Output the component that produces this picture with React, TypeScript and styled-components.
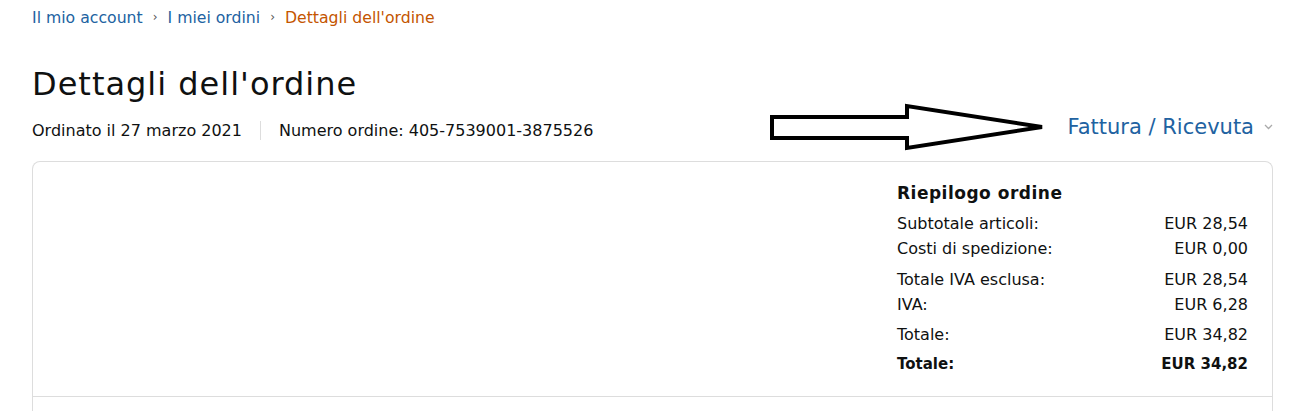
import React from "react";
import styled, { createGlobalStyle } from "styled-components";

const GlobalStyle = createGlobalStyle`
  body {
    margin: 0;
    background: #ffffff;
    font-family: "DejaVu Sans", "Noto Sans", sans-serif;
    color: #0f1111;
  }
`;

const Page = styled.div`
  position: relative;
  padding: 0 37px 0 32px;
  height: 411px;
  overflow: hidden;
`;

const Crumbs = styled.nav`
  display: flex;
  align-items: center;
  gap: 10px;
  height: 34px;
  font-size: 15.7px;
`;

const Crumb = styled.a<{ current?: boolean }>`
  color: ${(p) => (p.current ? "#c45500" : "#2162a1")};
  text-decoration: none;
`;

const CrumbSep = styled.span`
  color: #555;
  font-size: 12px;
`;

const Title = styled.h1`
  margin: 30px 0 0;
  font-size: 32px;
  font-weight: 400;
  letter-spacing: 1px;
  line-height: 40px;
`;

const MetaRow = styled.div`
  display: flex;
  align-items: center;
  justify-content: space-between;
  margin-top: 9px;
  height: 34px;
`;

const Meta = styled.div`
  display: flex;
  align-items: center;
  font-size: 16px;
`;

const MetaDivider = styled.span`
  width: 1px;
  height: 19px;
  background: #ddd;
  margin: 0 18px;
`;

const InvoiceLink = styled.a`
  display: flex;
  align-items: center;
  gap: 10px;
  color: #2162a1;
  font-size: 21px;
  text-decoration: none;
  margin-bottom: 6px;
`;

const Card = styled.section`
  margin-top: 14px;
  border: 1px solid #dddddd;
  border-bottom: none;
  border-radius: 8px 8px 0 0;
`;

const CardBody = styled.div`
  display: flex;
  justify-content: flex-end;
  padding: 19px 24px 19px;
  border-bottom: 1px solid #dddddd;
`;

const Summary = styled.div`
  width: 351px;
  font-size: 16px;
`;

const SummaryTitle = styled.div`
  font-weight: 700;
  font-size: 17px;
  letter-spacing: 0.5px;
  line-height: 25px;
  margin-bottom: 5px;
`;

const Group = styled.div<{ spacing: number }>`
  margin-bottom: ${(p) => p.spacing}px;
`;

const Line = styled.div<{ strong?: boolean }>`
  display: flex;
  justify-content: space-between;
  line-height: 25px;
  font-size: ${(p) => (p.strong ? 15 : 16)}px;
  font-weight: ${(p) => (p.strong ? 700 : 400)};
`;

const CardFoot = styled.div`
  height: 40px;
`;

const Arrow = styled.svg`
  position: absolute;
  left: 768px;
  top: 100px;
`;

const summary: { label: string; value: string }[][] = [
  [
    { label: "Subtotale articoli:", value: "EUR 28,54" },
    { label: "Costi di spedizione:", value: "EUR 0,00" },
  ],
  [
    { label: "Totale IVA esclusa:", value: "EUR 28,54" },
    { label: "IVA:", value: "EUR 6,28" },
  ],
  [{ label: "Totale:", value: "EUR 34,82" }],
];

export default function App() {
  return (
    <Page>
      <GlobalStyle />
      <Crumbs>
        <Crumb href="#">Il mio account</Crumb>
        <CrumbSep>›</CrumbSep>
        <Crumb href="#">I miei ordini</Crumb>
        <CrumbSep>›</CrumbSep>
        <Crumb current>Dettagli dell'ordine</Crumb>
      </Crumbs>

      <Title>Dettagli dell'ordine</Title>

      <MetaRow>
        <Meta>
          <span>Ordinato il 27 marzo 2021</span>
          <MetaDivider />
          <span>Numero ordine: 405-7539001-3875526</span>
        </Meta>
        <InvoiceLink href="#">
          Fattura / Ricevuta
          <svg width="9" height="6" viewBox="0 0 9 6">
            <path d="M1 1l3.5 3.5L8 1" fill="none" stroke="#aaa" strokeWidth="1.3" />
          </svg>
        </InvoiceLink>
      </MetaRow>

      <Card>
        <CardBody>
          <Summary>
            <SummaryTitle>Riepilogo ordine</SummaryTitle>
            {summary.map((group, i) => (
              <Group key={i} spacing={i === 0 ? 6 : 5}>
                {group.map((row) => (
                  <Line key={row.label}>
                    <span>{row.label}</span>
                    <span>{row.value}</span>
                  </Line>
                ))}
              </Group>
            ))}
            <Line strong>
              <span>Totale:</span>
              <span>EUR 34,82</span>
            </Line>
          </Summary>
        </CardBody>
        <CardFoot />
      </Card>

      {/* hand-drawn pointer toward the invoice link */}
      <Arrow width="280" height="56" viewBox="768 100 280 56">
        <path
          d="M772 117 L907 117 L907 106 L1042 127 L907 148 L907 138 L772 138 Z"
          fill="#fff"
          stroke="#000"
          strokeWidth="4"
          strokeLinejoin="miter"
        />
      </Arrow>
    </Page>
  );
}
